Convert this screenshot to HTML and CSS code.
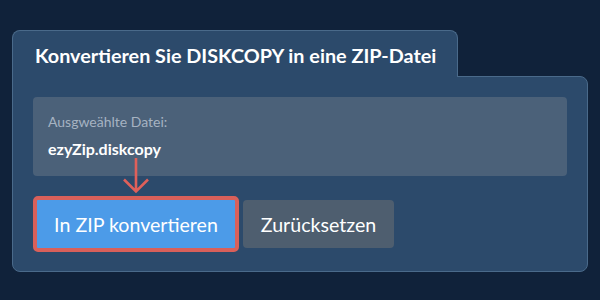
FILE: index.html
```html
<!DOCTYPE html>
<html>

<head>
  <meta charset="utf-8">
  <meta name="viewport" content="width=device-width">
  <title>DISKCOPY in ZIP</title>

  <link rel="stylesheet" href="styles.css">
</head>

<body>
  <div class="card">
    <div class="card__tab">
      <h1 class="card__title">Konvertieren Sie DISKCOPY in eine ZIP-Datei</h1>
    </div>

    <div class="card__panel">
      <div class="file-box">
        <span class="file-box__label">Ausgweählte Datei:</span>
        <span class="file-box__name">ezyZip.diskcopy</span>
      </div>

      <div class="actions">
        <div class="actions__main">
          <svg class="arrow" width="28" height="36" viewBox="0 0 28 36">
            <path d="M14 0 V33.5 M2 21.5 L14 33.5 L26 21.5" fill="none" stroke="#e0605a" stroke-width="2.6"/>
          </svg>
          <button class="button button--convert" type="button">In ZIP konvertieren</button>
        </div>
        <button class="button button--reset" type="button">Zurücksetzen</button>
      </div>
    </div>
  </div>
</body>

</html>
```

FILE: styles.css
```css
:root {
  --color-bg: #10223a;
  --color-panel: #2c4a6b;
  --color-border: #4a6a8a;
  --color-box: #4b6179;
  --color-accent: #4c9be8;
  --color-mark: #d9605a;
}

body {
  margin: 0;
  background-color: var(--color-bg);
  font-family: Lato, 'Noto Sans', sans-serif;
  color: #fff;
}

.card {
  width: 576px;
  margin: 30px 0 0 12px;
}

.card__tab {
  position: relative;
  z-index: 1;
  display: inline-block;
  box-sizing: border-box;
  width: 446px;
  height: 47px;
  margin-bottom: -1px;
  padding: 0 0 0 22px;
  border: 1px solid var(--color-border);
  border-bottom: none;
  border-radius: 8px 8px 0 0;
  background-color: var(--color-panel);
}

.card__title {
  margin: 0;
  font-size: 19.8px;
  font-weight: 700;
  line-height: 48px;
  white-space: nowrap;
}

.card__panel {
  box-sizing: border-box;
  padding: 20px 20px 19px;
  border: 1px solid var(--color-border);
  border-radius: 0 8px 8px 8px;
  background-color: var(--color-panel);
}

.file-box {
  display: flex;
  flex-direction: column;
  box-sizing: border-box;
  height: 79px;
  padding: 16px 15px 0;
  border-radius: 4px;
  background-color: var(--color-box);
}

.file-box__label {
  font-size: 14px;
  color: #a6b3c2;
  line-height: 18px;
}

.file-box__name {
  margin-top: 8px;
  font-size: 16px;
  font-weight: 700;
  line-height: 20px;
}

.actions {
  display: flex;
  align-items: center;
  gap: 4px;
  margin-top: 20px;
}

.actions__main {
  position: relative;
}

.arrow {
  position: absolute;
  left: 89px;
  top: -38px;
}

.button {
  box-sizing: border-box;
  height: 48px;
  border: none;
  border-radius: 4px;
  font: inherit;
  font-size: 19.6px;
  color: #fff;
  cursor: pointer;
}

.button--convert {
  display: block;
  height: 56px;
  width: 206px;
  border: 4px solid var(--color-mark);
  border-radius: 5px;
  background-color: var(--color-accent);
}

.button--reset {
  width: 151px;
  background-color: #4e5e6f;
}
```
